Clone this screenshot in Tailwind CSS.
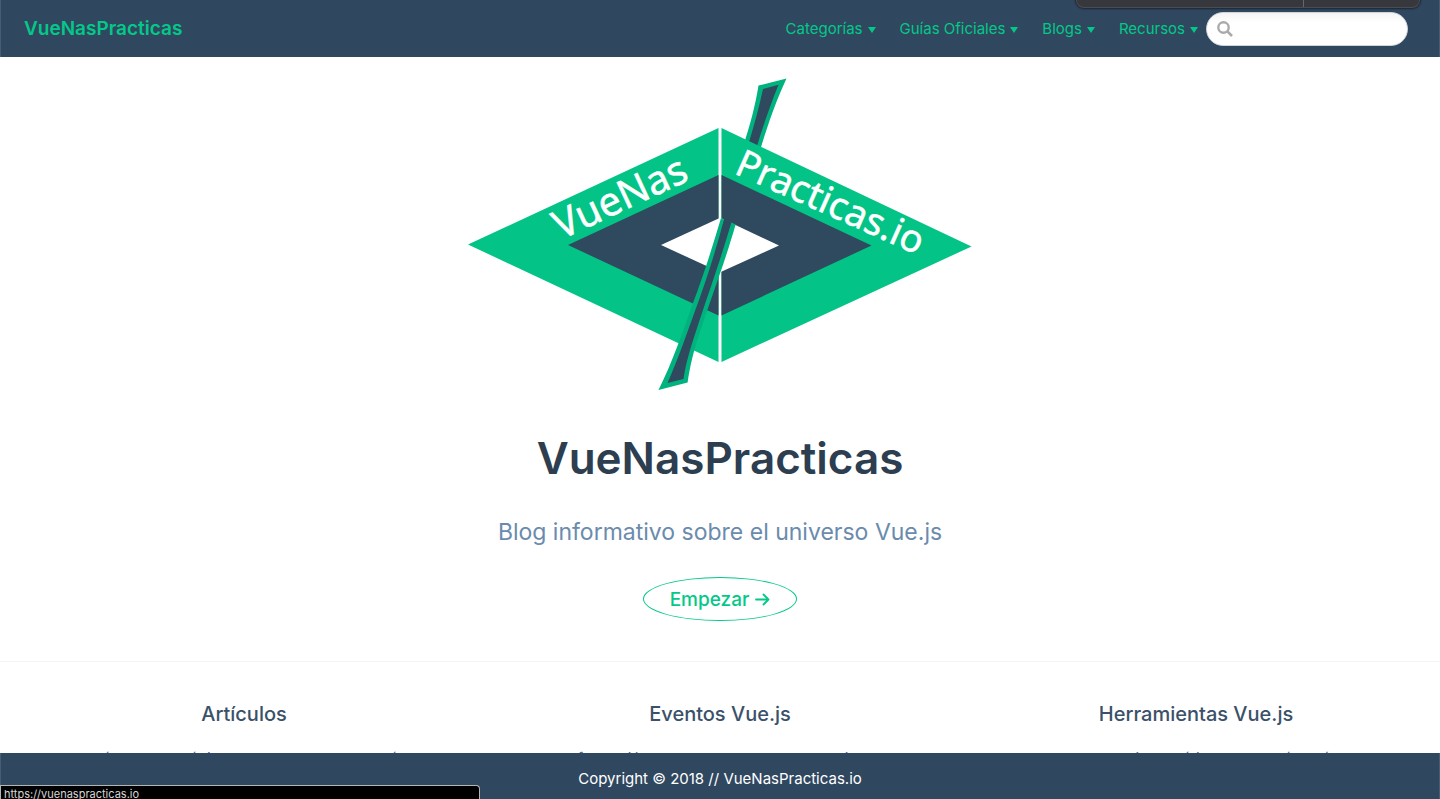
<!DOCTYPE html>
<html lang="es">
<head>
<meta charset="utf-8">
<meta name="viewport" content="width=device-width, initial-scale=1">
<title>VueNasPracticas</title>
<script src="https://cdn.jsdelivr.net/npm/@tailwindcss/browser@4"></script>
</head>
<body class="bg-white font-['Inter','Liberation_Sans',sans-serif] text-[#2c3e50] antialiased">
<div class="relative flex h-screen flex-col overflow-hidden">

  <header class="flex h-[57px] shrink-0 items-center justify-between border-x border-[#465d77] bg-[#304760] pr-[31px] pl-[23px]">
    <a href="#" class="pt-[2px] text-[19px] font-semibold text-[#03c988]">VueNasPracticas</a>
    <div class="flex items-center gap-2">
      <nav aria-label="Principal" class="flex items-center gap-6 pt-[2px] text-[15px] text-[#03c988]">
        <button type="button" class="flex items-center gap-[5px]">Categorías
          <svg class="h-[6px] w-2" viewBox="0 0 8 6" fill="currentColor" aria-hidden="true"><path d="M0 0h8L4 6z"/></svg></button>
        <button type="button" class="flex items-center gap-[5px]">Guías Oficiales
          <svg class="h-[6px] w-2" viewBox="0 0 8 6" fill="currentColor" aria-hidden="true"><path d="M0 0h8L4 6z"/></svg></button>
        <button type="button" class="flex items-center gap-[5px]">Blogs
          <svg class="h-[6px] w-2" viewBox="0 0 8 6" fill="currentColor" aria-hidden="true"><path d="M0 0h8L4 6z"/></svg></button>
        <button type="button" class="flex items-center gap-[5px]">Recursos
          <svg class="h-[6px] w-2" viewBox="0 0 8 6" fill="currentColor" aria-hidden="true"><path d="M0 0h8L4 6z"/></svg></button>
      </nav>
      <label class="flex h-[34px] w-[202px] items-center gap-2 rounded-full border border-[#cfd4db] bg-linear-to-b from-[#f4f4f4] to-white to-30% px-[10px]">
        <svg class="size-4 shrink-0" viewBox="0 0 16 16" fill="none" stroke="#aaa" aria-hidden="true"><circle cx="6.5" cy="6.5" r="5.2" stroke-width="2.4"/><path d="M10.4 10.4l4.6 4.6" stroke-width="2.6"/></svg>
        <input type="search" aria-label="Buscar" class="min-w-0 flex-1 bg-transparent text-sm text-[#4e6e8e] outline-none">
      </label>
    </div>
  </header>

  <main class="min-h-0 flex-1 overflow-hidden">
    <section class="flex flex-col items-center pt-[21px] pb-10 text-center">
      <svg class="h-[312px] w-[504px]" viewBox="468 78 504 312" role="img" aria-label="Logo VueNasPracticas.io">
        <path fill="#00b37e" d="M758.5 85.5L786.5 78.5C776 101 767 127 760.5 149L744.5 142C750 125 755 107 758.5 85.5z"/>
        <path fill="#2f495f" d="M763 89L778.5 84.8C770 106 763 126 757 146L748.8 143C754 125 759 108 763 89z"/>
        <path fill="#03c486" d="M468 244.5L718.5 128V362zM721.5 128L971.5 246.5L721.5 362z"/>
        <path fill="#2f495f" d="M568 245L718.5 175V315.5zM721.5 175L871.5 245.5L721.5 315.5z"/>
        <path fill="#fff" d="M661 245L720.2 217.8L779 245.5L720.2 272.3z"/>
        <path fill="#00b37e" d="M721 218L735.6 224.5C724 265 711 298 701 329C694 349 690 366 687.6 382.5L658.5 390C672 363 682 334 693 303C704 274 713 245 721 218z"/>
        <path fill="#2f495f" d="M724.2 218.8L731.4 222.4C721 258 708 295 698 325C691 346 686 362 683.5 379L667.5 383C679 357 688 330 699 300C709 272 717 246 724.2 218.8z"/>
        <g fill="#fff" stroke="#fff" stroke-width="0.5" font-family="Noto Sans, Open Sans, sans-serif">
          <text transform="translate(561 240) rotate(-25)" font-size="40">VueNas</text>
          <text transform="translate(733 173) rotate(24)" font-size="38">Practicas.io</text>
        </g>
      </svg>
      <h1 class="mt-[38px] text-[44px] leading-[60px] font-semibold">VueNasPracticas</h1>
      <p class="mt-[26px] text-[23px] leading-9 text-[#6a8bad]">Blog informativo sobre el universo Vue.js</p>
      <a href="#" class="mt-[27px] flex h-11 items-center gap-[6px] rounded-[50%] border border-[#03c988] px-[26px] pt-[2px] text-[19px] font-medium text-[#03c988]">Empezar
        <svg class="size-[15px]" viewBox="0 0 15 15" fill="none" stroke="currentColor" stroke-width="1.8" stroke-linecap="round" stroke-linejoin="round" aria-hidden="true"><path d="M1 6.5h12.5M8.5 1.5l5 5-5 5"/></svg></a>
    </section>

    <section class="flex justify-between border-t border-[#f3f4f5] px-10 pt-9 text-center">
      <article class="w-[30%]">
        <h2 class="text-xl leading-8 font-medium text-[#3a5169]">Artículos</h2>
        <p class="mt-[15px] text-[15px] leading-7 text-[#4e6e8e]">Artículos de la última hora sobre Vue y su día</p>
      </article>
      <article class="w-[30%]">
        <h2 class="text-xl leading-8 font-medium text-[#3a5169]">Eventos Vue.js</h2>
        <p class="mt-[15px] text-[15px] leading-7 text-[#4e6e8e]">Información sobre eventos de la comunidad</p>
      </article>
      <article class="w-[30%]">
        <h2 class="text-xl leading-8 font-medium text-[#3a5169]">Herramientas Vue.js</h2>
        <p class="mt-[15px] text-[15px] leading-7 text-[#4e6e8e]">Las herramientas útiles para el día a día</p>
      </article>
    </section>
  </main>

  <footer class="flex h-[46px] shrink-0 items-center justify-center border-x border-[#465d77] bg-[#304760] pt-[6px] text-[15px] text-white">Copyright © 2018 // VueNasPracticas.io</footer>

  <!-- Browser overlays: top panel edge and link status -->
  <div class="absolute top-0 right-5 flex h-[8px] w-[344px] rounded-b-lg border border-t-0 border-[#4c4d52] bg-[#37383d] shadow-[0_0_2px_1px_#1c2530]">
    <span class="w-[227px] border-r border-[#66676b]"></span>
  </div>
  <div class="absolute bottom-0 left-0 h-[14px] w-[480px] rounded-tr border border-b-0 border-[#b5b5b5] bg-black pl-[3px] text-[11px] leading-4 text-[#d6d6d6]">https://vuenaspracticas.io</div>
</div>
</body>
</html>
